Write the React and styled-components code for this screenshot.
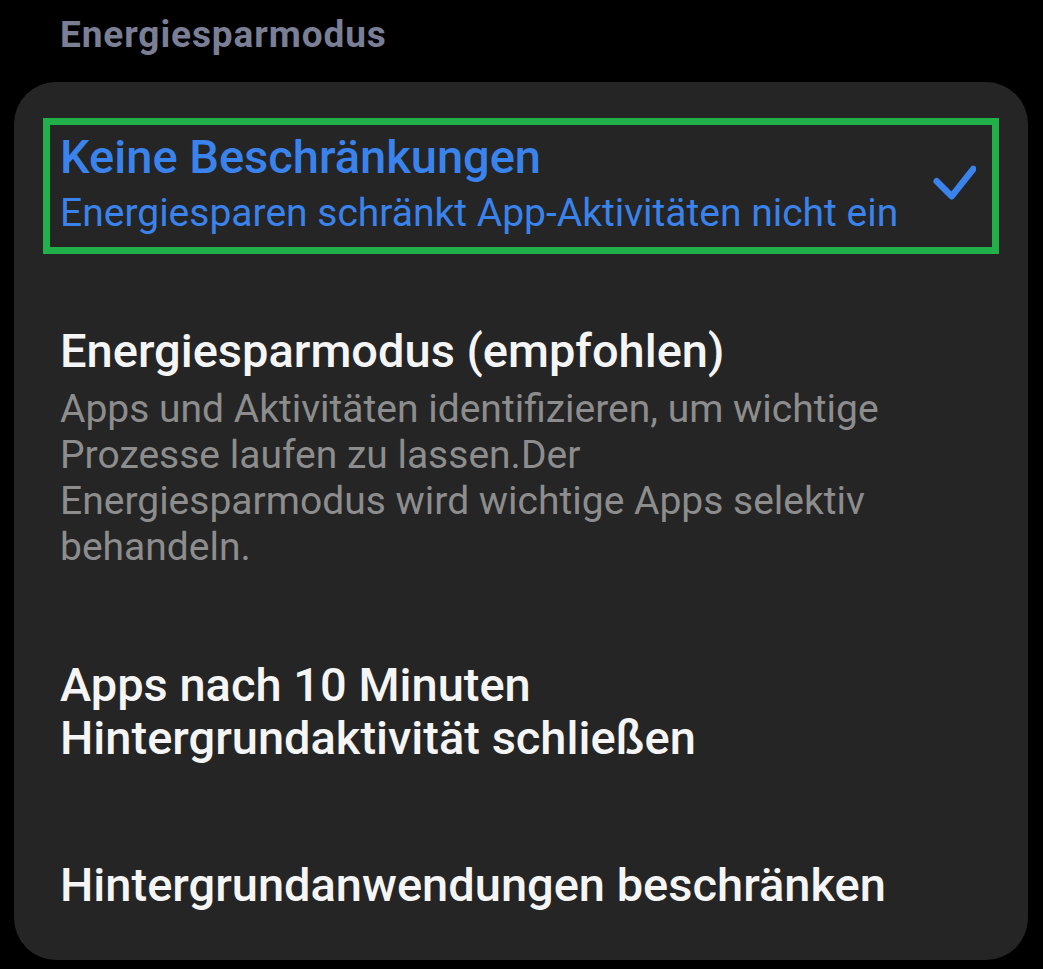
import styled, { createGlobalStyle } from "styled-components";

const Global = createGlobalStyle`
    body {
        margin: 0;
        background: #000;
        font-family: Roboto, "Noto Sans", sans-serif;
    }
`

const Page = styled.div`
    width: 1043px;
    min-height: 969px;
    background: #000;
    padding-top: 15px;
    box-sizing: border-box;
`

const Heading = styled.h2`
    margin: 0 0 27px 60px;
    font-size: 37px;
    line-height: 40px;
    font-weight: 700;
    letter-spacing: 0.9px;
    color: #7a7f95;
`

const Card = styled.div`
    margin: 0 15px 0 14px;
    padding: 4px 52px 5px 46px;
    background: #252525;
    border-radius: 42px;
`

const Item = styled.div`
    padding: 44px 0;

    &:last-child {
        padding-top: 50px;
    }
`

const Highlight = styled.div`
    margin: -12px -23px -18px -17px;
    padding: 5px 16px 11px 10px;
    border: 7px solid #22b04b;
`

const Row = styled.div`
    display: flex;
    align-items: center;
    justify-content: space-between;
`

const Texts = styled.div`
    display: flex;
    flex-direction: column;
    gap: ${p => p.$tight ? "7px" : "9px"};
`

const Title = styled.div`
    font-size: 47px;
    line-height: 53px;
    font-weight: 500;
    color: ${p => p.$active ? "#3a83ec" : "#f5f5f5"};
`

const Desc = styled.div`
    font-size: 39px;
    line-height: 46px;
    color: ${p => p.$active ? "#3a83ec" : "#8d8d8d"};
`

const Check = styled.svg`
    flex-shrink: 0;
    width: 44px;
    height: 40px;
`

function Option({ title, desc, active }) {
    const row = (
        <Row>
            <Texts $tight={active}>
                <Title $active={active}>{title}</Title>
                {desc && <Desc $active={active}>{desc}</Desc>}
            </Texts>
            {active && (
                <Check viewBox="0 0 44 40">
                    <path d="M4.7 18.3 L19.7 33.3 L41.3 6" fill="none" stroke="#3a83ec" strokeWidth="6.5" strokeLinecap="round" strokeLinejoin="round" />
                </Check>
            )}
        </Row>
    )
    return (
        <Item>
            {active ? <Highlight>{row}</Highlight> : row}
        </Item>
    )
}

export default function App() {
    return (
        <Page>
            <Global />
            <Heading>Energiesparmodus</Heading>
            <Card>
                <Option
                    active
                    title="Keine Beschränkungen"
                    desc="Energiesparen schränkt App-Aktivitäten nicht ein"
                />
                <Option
                    title="Energiesparmodus (empfohlen)"
                    desc={<>Apps und Aktivitäten identifizieren, um wichtige<br />Prozesse laufen zu lassen.Der<br />Energiesparmodus wird wichtige Apps selektiv<br />behandeln.</>}
                />
                <Option title={<>Apps nach 10 Minuten<br />Hintergrundaktivität schließen</>} />
                <Option title="Hintergrundanwendungen beschränken" />
            </Card>
        </Page>
    )
}
